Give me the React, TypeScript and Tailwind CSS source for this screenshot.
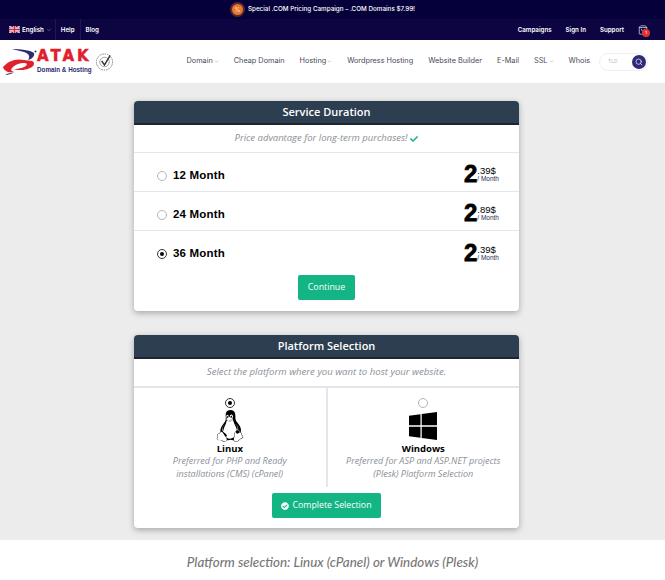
import React from "react";
import { ChevronDown, Search, ShoppingBag } from "lucide-react";
import { FaLinux, FaWindows, FaCheck, FaCheckCircle } from "react-icons/fa";

const Radio = ({ on }: { on?: boolean }) => (
  <span className={`flex h-[10px] w-[10px] shrink-0 items-center justify-center rounded-full border ${on ? "border-[#333]" : "border-[#b5b5b5]"} bg-white`}>
    {on && <span className="h-1 w-1 rounded-full bg-black" />}
  </span>
);

const Flag = () => (
  <svg width="11" height="7" viewBox="0 0 22 14" className="shrink-0">
    <rect width="22" height="14" fill="#2b3a8c" />
    <path d="M0 0L22 14M22 0L0 14" stroke="#fff" strokeWidth="3" />
    <path d="M0 0L22 14M22 0L0 14" stroke="#d8273a" strokeWidth="1" />
    <path d="M11 0V14M0 7H22" stroke="#fff" strokeWidth="5" />
    <path d="M11 0V14M0 7H22" stroke="#d8273a" strokeWidth="3" />
  </svg>
);

const Logo = () => (
  <div className="flex items-center">
    <svg width="35" height="28" viewBox="0 0 35 28" className="shrink-0">
      <path d="M10 1C18 1 28 2 32 5C33 8 30 11 26 12C28 9 28 6 22 4C18 3 14 2 10 1Z" fill="#2b2a73" />
      <path d="M1 19C6 13 14 10 22 12L30 13C33 14 33 18 28 20C22 23 15 22 11 21C17 21 25 19 25 16C23 14 15 15 11 19C8 22 9 23 12 24C6 25 2 23 1 19Z" fill="#e0202c" />
      <path d="M3 27C6 25 9 25 12 24.5C9 26 6 27 3 27Z" fill="#2b2a73" />
      <circle cx="33.5" cy="3.5" r="1" fill="#2b2a73" />
    </svg>
    <div className="flex flex-col">
      <span className="font-['DejaVu_Sans',sans-serif] text-[15px] leading-[13px] font-bold tracking-[3px] text-[#e0202c] [-webkit-text-stroke:0.5px_#e0202c]">ATAK</span>
      <span className="mt-[3px] font-['Liberation_Sans',sans-serif] text-[6.3px] leading-[7px] font-bold whitespace-nowrap text-[#2b2a73]">Domain &amp; Hosting</span>
    </div>
    <svg width="19" height="20" viewBox="0 0 20 20" className="ml-[3px] shrink-0">
      <circle cx="10" cy="10" r="8.5" fill="none" stroke="#777" strokeWidth="1" strokeDasharray="1.5 1" />
      <circle cx="10" cy="10" r="5" fill="none" stroke="#888" strokeWidth="0.8" />
      <path d="M7 9L10 13L16 3" fill="none" stroke="#333" strokeWidth="1.5" />
    </svg>
  </div>
);

const NavItem = ({ label, chev }: { label: string; chev?: boolean }) => (
  <span className="flex items-center gap-[1px] whitespace-nowrap">
    {label}
    {chev && <ChevronDown className="h-[5px] w-[5px] text-[#999]" strokeWidth={2.5} />}
  </span>
);

const PriceRow = ({ label, cents, on, last }: { label: string; cents: string; on?: boolean; last?: boolean }) => (
  <div className={`flex h-[39px] items-center justify-between pt-[7px] pr-[20px] pl-[23px] ${last ? "" : "border-b border-[#e3e6ea]"}`}>
    <div className="flex items-center gap-[6px]">
      <Radio on={on} />
      <span className="font-['Liberation_Sans',sans-serif] text-[11.5px] font-bold tracking-[0.2px] text-black">{label}</span>
    </div>
    <div className="-mt-[3px] flex items-center font-['Liberation_Sans',sans-serif] text-black">
      <span className="text-[24px] leading-[20px] font-bold [-webkit-text-stroke:0.8px_#000]">2</span>
      <div className="flex flex-col">
        <span className="text-[9.5px] leading-[9px]">.{cents}$</span>
        <span className="text-[6.5px] leading-[7px] text-[#2b2a50]">/ Month</span>
      </div>
    </div>
  </div>
);

const CardHead = ({ title }: { title: string }) => (
  <div className="flex h-[24px] items-center justify-center rounded-t-[4px] border-b-2 border-[#1c2530] bg-[#2c3e50] pt-[1px] text-[11px] font-semibold text-white">
    {title}
  </div>
);

const PlatformCol = ({ name, lines, on, icon, border }: { name: string; lines: string[]; on?: boolean; icon: React.ReactNode; border?: boolean }) => (
  <div className={`flex flex-1 flex-col items-center pt-[10px] ${border ? "border-r-2 border-[#e3e6ea]" : ""}`}>
    <Radio on={on} />
    <div className="mt-[2px] flex h-[31px] items-center justify-center">{icon}</div>
    <span className="mt-[2px] text-[9.5px] leading-[11px] font-bold text-black">{name}</span>
    <div className="text-center text-[9px] leading-[13px] text-[#8a8f98] italic">
      {lines.map((l) => (
        <div key={l}>{l}</div>
      ))}
    </div>
  </div>
);

export default function App() {
  return (
    <div className="flex h-[580px] w-[665px] flex-col overflow-hidden bg-white font-['Open_Sans',sans-serif]">
      <div className="flex h-[19px] items-center justify-center bg-[#05003a] pr-[18px] font-['Inter',sans-serif] text-[6.3px] font-medium text-white">
        <span className="mr-[5px] flex h-[11px] w-[11px] items-center justify-center rounded-full bg-[#e8762c] text-[6px] text-[#fde0c8] shadow-[0_0_0_2px_rgba(232,118,44,0.35)]">%</span>
        Special .COM Pricing Campaign – .COM Domains $7.99!
      </div>
      <div className="flex h-[21px] items-center justify-between bg-[#0c0542] pr-[17px] pl-[9px] font-['Inter',sans-serif] text-[6.2px] font-semibold text-white">
        <div className="flex h-full items-center">
          <span className="flex h-full items-center gap-[2px] border-r border-[#1d1758] pr-[3px]">
            <Flag /> English <ChevronDown className="h-[6px] w-[6px] text-[#8f8fb0]" />
          </span>
          <span className="flex h-full items-center border-r border-[#1d1758] px-[5px]">Help</span>
          <span className="flex h-full items-center px-[5px]">Blog</span>
        </div>
        <div className="flex items-center">
          <span>Campaigns</span>
          <span className="ml-[14px]">Sign In</span>
          <span className="ml-[14px]">Support</span>
          <span className="relative ml-[14px] flex">
            <ShoppingBag className="h-[10px] w-[10px] text-white" strokeWidth={1.5} />
            <span className="absolute top-[4px] left-[4px] flex h-[8px] w-[8px] items-center justify-center rounded-full bg-[#e5302e] text-[4px] leading-none">1</span>
          </span>
        </div>
      </div>
      <div className="flex h-[43px] items-center justify-between pr-[17px] pl-[2px]">
        <Logo />
        <div className="flex items-center font-['Inter',sans-serif] text-[7.3px] text-[#4a4a5a]">
          <div className="flex items-center gap-[15px]">
            <NavItem label="Domain" chev />
            <NavItem label="Cheap Domain" />
            <NavItem label="Hosting" chev />
            <NavItem label="Wordpress Hosting" />
            <NavItem label="Website Builder" />
            <NavItem label="E-Mail" />
            <NavItem label="SSL" chev />
            <NavItem label="Whois" />
          </div>
          <div className="ml-[9px] flex h-[18px] w-[49px] items-center justify-between rounded-full border border-[#eef0f4] pr-[1px] pl-[8px]">
            <span className="text-[5px] text-[#b5b8c0]">TLD</span>
            <span className="flex h-[14px] w-[14px] items-center justify-center rounded-full bg-[#2f2a77]">
              <Search className="h-2 w-2 text-white" strokeWidth={2} />
            </span>
          </div>
        </div>
      </div>
      <div className="flex h-[457px] flex-col items-center gap-[24px] bg-[#ececec] pt-[18px] pr-[12px]">
        <div className="h-[210px] w-[385px] rounded-[4px] bg-white shadow-[0_2px_6px_rgba(0,0,0,0.3)]">
          <CardHead title="Service Duration" />
          <div className="flex h-[28px] items-center justify-center gap-[3px] border-b border-[#e3e6ea] text-[9.5px] text-[#8a8f98] italic">
            Price advantage for long-term purchases! <FaCheck className="h-[8px] w-[8px] text-[#13b585]" />
          </div>
          <PriceRow label="12 Month" cents="39" />
          <PriceRow label="24 Month" cents="89" />
          <PriceRow label="36 Month" cents="39" on last />
          <div className="flex justify-center pt-[5px]">
            <button className="h-[25px] w-[57px] rounded-[2px] bg-[#13b585] text-[8.8px] text-white">Continue</button>
          </div>
        </div>
        <div className="h-[193px] w-[385px] rounded-[4px] bg-white shadow-[0_2px_6px_rgba(0,0,0,0.3)]">
          <CardHead title="Platform Selection" />
          <div className="flex h-[29px] items-center justify-center border-b-2 border-[#e3e6ea] text-[9.6px] text-[#8a8f98] italic">
            Select the platform where you want to host your website.
          </div>
          <div className="flex h-[99px]">
            <PlatformCol border on name="Linux" lines={["Preferred for PHP and Ready", "installations (CMS) (cPanel)"]} icon={<FaLinux className="h-[32px] w-[32px] text-black" />} />
            <PlatformCol name="Windows" lines={["Preferred for ASP and ASP.NET projects", "(Plesk) Platform Selection"]} icon={<FaWindows className="h-[32px] w-[32px] text-black" />} />
          </div>
          <div className="flex justify-center pt-[6px]">
            <button className="flex h-[25px] w-[109px] items-center justify-center gap-[3px] rounded-[2px] bg-[#13b585] text-[8.8px] text-white">
              <FaCheckCircle className="h-[8px] w-[8px]" /> Complete Selection
            </button>
          </div>
        </div>
      </div>
      <div className="flex h-[40px] items-center justify-center pt-[4px] font-['Lato',sans-serif] text-[13.4px] font-medium text-[#777] italic">
        Platform selection: Linux (cPanel) or Windows (Plesk)
      </div>
    </div>
  );
}
